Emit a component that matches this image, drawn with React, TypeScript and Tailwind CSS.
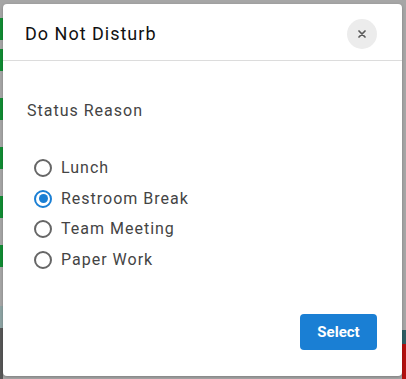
import { useState } from "react";

const reasons = ["Lunch", "Restroom Break", "Team Meeting", "Paper Work"];

// green status stripes peeking out from the page under the overlay
const stripes = [18, 67, 116, 165, 214, 263];

export default function App() {
  const [picked, setPicked] = useState("Restroom Break");

  return (
    <div
      className="relative h-[379px] w-[406px] overflow-hidden bg-[#a6a6a6]"
      style={{ fontFamily: "Roboto, 'Noto Sans', sans-serif" }}
    >
      {/* page behind */}
      <div className="flex h-full w-[3px] flex-col">
        {stripes.map((y, i) => (
          <div key={y} className={`h-[49px] ${i === 0 ? "pt-[18px]" : ""}`}>
            <div className="h-[22px] bg-[#118c33]" />
          </div>
        ))}
        <div className="h-[12px]" />
        <div className="h-[22px] bg-[#8ea4a4]" />
        <div className="flex-1 bg-[#575757]" />
      </div>
      <div className="absolute right-0 top-[330px] flex h-[49px] w-[4px] flex-col">
        <div className="h-[14px] bg-[#2f5d63]" />
        <div className="flex-1 bg-[#b3100f]" />
      </div>

      {/* dialog */}
      <div className="absolute left-[3px] top-[4px] flex h-[372px] w-[399px] flex-col rounded-[4px] bg-white shadow-[0_1px_3px_rgba(0,0,0,0.25)]">
        <div className="flex h-[57px] items-center justify-between border-b border-[#dcdcdc] pl-[22px] pr-[25px] pt-[4px]">
          <h2 className="text-[18px] font-normal leading-[24px] tracking-[1px] text-[#111]">Do Not Disturb</h2>
          <button
            type="button"
            className="flex h-[30px] w-[30px] items-center justify-center rounded-full bg-[#ececec]"
          >
            <svg width="8" height="8" viewBox="0 0 8 8">
              <path d="M1 1L7 7M7 1L1 7" stroke="#5a5a5a" strokeWidth="1.7" strokeLinecap="round" />
            </svg>
          </button>
        </div>

        <div className="flex flex-1 flex-col px-[24px] pt-[40px]">
          <div className="text-[16px] leading-[20px] tracking-[1px] text-[#444]">Status Reason</div>

          <div className="mt-[37px] flex flex-col gap-[10.67px]">
            {reasons.map((r) => {
              const on = r === picked;
              return (
                <label
                  key={r}
                  onClick={() => setPicked(r)}
                  className="flex h-[20px] cursor-pointer items-center gap-[9px] pl-[7px]"
                >
                  <span
                    className={`flex h-[18px] w-[18px] items-center justify-center rounded-full border-2 ${
                      on ? "border-[#1a7fd4]" : "border-[#666]"
                    }`}
                  >
                    {on && <span className="h-[9px] w-[9px] rounded-full bg-[#1a7fd4]" />}
                  </span>
                  <span className="text-[16px] leading-[20px] tracking-[1px] text-[#444]">{r}</span>
                </label>
              );
            })}
          </div>

          <div className="mt-auto flex justify-end pb-[26px] pr-[1px]">
            <button
              type="button"
              className="h-[36px] w-[77px] rounded-[4px] bg-[#1a7fd4] text-[15px] font-bold text-white"
            >
              Select
            </button>
          </div>
        </div>
      </div>
    </div>
  );
}
